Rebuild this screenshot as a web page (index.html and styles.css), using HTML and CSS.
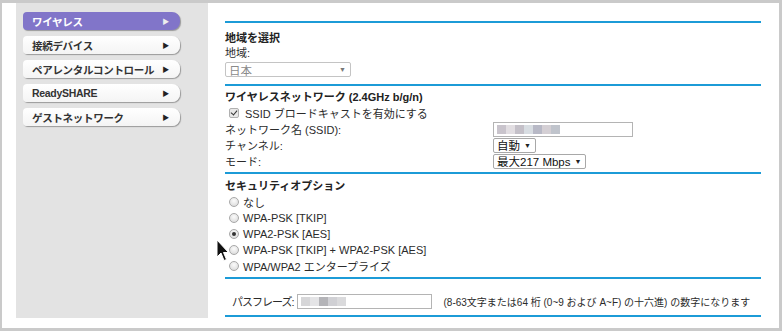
FILE: index.html
```html
<!DOCTYPE html>
<html lang="ja">
<head>
  <meta charset="UTF-8" />
  <title>ワイヤレス設定</title>
  <link rel="stylesheet" href="styles.css">
</head>
<body>
  <div class="frame">
    <nav class="sidebar">
      <a class="menu active">ワイヤレス<span class="arrow">▶</span></a>
      <a class="menu">接続デバイス<span class="arrow">▶</span></a>
      <a class="menu">ペアレンタルコントロール<span class="arrow">▶</span></a>
      <a class="menu">ReadySHARE<span class="arrow">▶</span></a>
      <a class="menu">ゲストネットワーク<span class="arrow">▶</span></a>
    </nav>

    <main class="content">
      <section class="section s-region">
        <h3>地域を選択</h3>
        <div class="line">地域:</div>
        <div class="select disabled region">日本<span class="caret">▼</span></div>
      </section>

      <section class="section s-wireless">
        <h3>ワイヤレスネットワーク (2.4GHz b/g/n)</h3>
        <div class="row"><span class="check"></span>SSID ブロードキャストを有効にする</div>
        <div class="row field">
          <span class="label">ネットワーク名 (SSID):</span>
          <span class="input ssid">
            <i class="px" style="background:#c9c4cc"></i><i class="px" style="background:#e2dee2"></i><i class="px" style="background:#c4c0c8"></i><i class="px" style="background:#d8dde2"></i><i class="px" style="background:#b8b9c6"></i><i class="px" style="background:#d4cfd4"></i><i class="px" style="background:#c0c4cc"></i>
          </span>
        </div>
        <div class="row field">
          <span class="label">チャンネル:</span>
          <span class="select">自動<span class="caret">▼</span></span>
        </div>
        <div class="row field">
          <span class="label">モード:</span>
          <span class="select">最大217 Mbps<span class="caret">▼</span></span>
        </div>
      </section>

      <section class="section s-security">
        <h3>セキュリティオプション</h3>
        <div class="row"><span class="radio"></span>なし</div>
        <div class="row"><span class="radio"></span>WPA-PSK [TKIP]</div>
        <div class="row"><span class="radio on"></span>WPA2-PSK [AES]</div>
        <div class="row"><span class="radio"></span>WPA-PSK [TKIP] + WPA2-PSK [AES]</div>
        <div class="row"><span class="radio"></span>WPA/WPA2 エンタープライズ</div>
      </section>

      <section class="section s-pass">
        <div class="row pass">
          <span class="pass-label">パスフレーズ:</span>
          <span class="input passphrase">
            <i class="px" style="background:#d6d6d8"></i><i class="px" style="background:#e4e4e6"></i><i class="px" style="background:#b4b4b8"></i><i class="px" style="background:#d0d0d4"></i><i class="px" style="background:#dadadc"></i>
          </span>
          <span class="hint">(8-63文字または64 桁 (0~9 および A~F) の十六進) の数字になります</span>
        </div>
      </section>
    </main>

    <svg class="cursor" width="14" height="24" viewBox="0 0 14 24">
      <path d="M1 1 L1 18 L5 14 L8 21.5 L10.5 20.5 L7.5 13.5 L12.5 13.5 Z" fill="#111" stroke="#fff" stroke-width="1"/>
    </svg>
  </div>
</body>
</html>
```

FILE: styles.css
```css
:root {
  --frame: #cacaca;
  --side: #e3e3e3;
  --accent: #1c9bd7;
  --purple: #8175c9;
  --text: #2b2b2b;
}

html, body {
  margin: 0;
  padding: 0;
}

body {
  font-family: "Liberation Sans", "Noto Sans CJK JP", sans-serif;
  font-size: 11px;
  color: var(--text);
  background: #fff;
}

.frame {
  position: relative;
  box-sizing: border-box;
  width: 782px;
  height: 331px;
  border-style: solid;
  border-color: var(--frame);
  border-width: 3px 3px 3px 2px;
  display: flex;
  align-items: flex-start;
}

/* left menu */
.sidebar {
  box-sizing: border-box;
  margin-left: 14px;
  width: 192px;
  height: 315px;
  padding: 9px 0 0 7px;
  background: var(--side);
  display: flex;
  flex-direction: column;
  gap: 6px;
}

.menu {
  box-sizing: border-box;
  width: 157px;
  height: 18px;
  padding: 0 11px 0 9px;
  display: flex;
  align-items: center;
  justify-content: space-between;
  font-weight: bold;
  font-size: 10.5px;
  letter-spacing: -0.3px;
  white-space: nowrap;
  color: #333;
  background: linear-gradient(#ffffff, #f4f4f4);
  border-radius: 4px 8px 8px 4px;
  box-shadow: 1px 1px 1px #9a9a9a;
}

.menu.active {
  color: #fff;
  background: var(--purple);
}

.arrow {
  font-size: 7px;
  color: #222;
}

.menu.active .arrow {
  color: #eee;
}

/* content */
.content {
  margin-left: 17px;
  width: 536px;
  padding-top: 18px;
}

.section {
  border-top: 2px solid var(--accent);
}

.section h3 {
  margin: 0;
  font-size: 11px;
  font-weight: bold;
  line-height: 15px;
  color: #222;
}

.s-region {
  padding: 7px 0 7px;
}

.s-region h3 {
  line-height: 16px;
}

.s-region .line {
  line-height: 14px;
}

.s-wireless {
  padding: 4px 0 3px;
}

.s-security {
  padding: 5px 0 3px;
}

.s-pass {
  padding: 14px 0 6px;
  border-bottom: 2px solid var(--accent);
}

.row {
  height: 16px;
  display: flex;
  align-items: center;
  white-space: nowrap;
}

.field .label {
  width: 268px;
}

.select {
  box-sizing: border-box;
  height: 15px;
  padding: 0 4px 0 3px;
  display: inline-flex;
  align-items: center;
  gap: 4px;
  border: 1px solid #a8a8a8;
  border-radius: 2px;
  background: #fff;
  font-size: 11.5px;
  color: #111;
}

.select.region {
  margin-top: 2px;
  width: 126px;
  justify-content: space-between;
  color: #8a8a8a;
  border-color: #c4c4c4;
}

.caret {
  font-size: 7px;
  color: #222;
}

.select.disabled .caret {
  color: #777;
}

.input {
  box-sizing: border-box;
  flex-shrink: 0;
  height: 15px;
  padding: 2px 3px;
  display: inline-flex;
  align-items: center;
  border: 1px solid #b4b4b4;
  background: #fff;
}

.ssid {
  width: 140px;
}

.passphrase {
  width: 135px;
}

.px {
  display: inline-block;
  width: 9px;
  height: 9px;
}

.check {
  box-sizing: border-box;
  width: 10px;
  height: 10px;
  margin: 0 6px 0 4px;
  border: 1px solid #b0b0b0;
  border-radius: 2px;
  background: #e8e8e8;
  position: relative;
}

.check::after {
  content: "";
  position: absolute;
  left: 2px;
  top: 0px;
  width: 3px;
  height: 5px;
  border: solid #333;
  border-width: 0 1.5px 1.5px 0;
  transform: rotate(40deg);
}

.radio {
  box-sizing: border-box;
  width: 10px;
  height: 10px;
  margin: 0 4px 0 4px;
  border: 1px solid #a8a8a8;
  border-radius: 50%;
  background: radial-gradient(circle at 50% 35%, #fbfbfb, #d6d6d6);
  position: relative;
}

.radio.on::after {
  content: "";
  position: absolute;
  left: 2px;
  top: 2px;
  width: 4px;
  height: 4px;
  border-radius: 50%;
  background: #333;
}

.pass {
  height: 16px;
}

.pass-label {
  flex-shrink: 0;
  margin: 0 3px 0 7px;
  letter-spacing: -1px;
}

.hint {
  margin-left: 12px;
  font-size: 10px;
}

.cursor {
  position: absolute;
  left: 214px;
  top: 236px;
}
```
